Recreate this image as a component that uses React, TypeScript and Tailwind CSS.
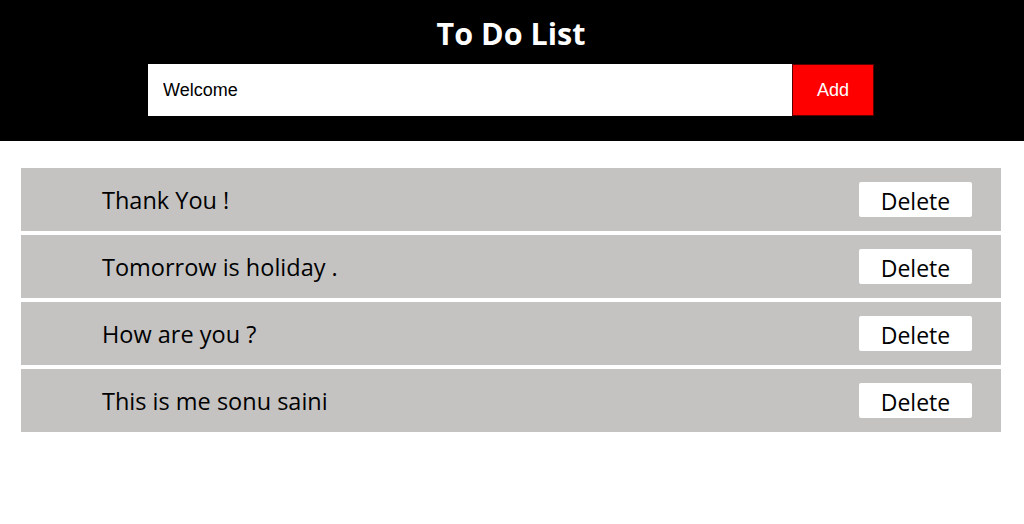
import { useState } from 'react'

const INITIAL = ['Thank You !', 'Tomorrow is holiday .', 'How are you ?', 'This is me sonu saini']

export default function App() {
  const [items, setItems] = useState(INITIAL)
  const [text, setText] = useState('Welcome')

  function add() {
    if (!text.trim()) return
    setItems([...items, text])
    setText('')
  }

  return (
    <div className="min-h-[524px] bg-white" style={{ fontFamily: '"Open Sans", "Noto Sans", sans-serif' }}>
      {/* Header */}
      <div className="bg-black h-[141px] flex flex-col items-center pt-[13px] pr-[2px]">
        <h1 className="text-white text-[30.5px] leading-[41px] font-bold">To Do List</h1>
        <div className="flex mt-[10px]">
          <input
            value={text}
            onChange={(e) => setText(e.target.value)}
            className="w-[644px] h-[52px] bg-white px-[15px] text-[18px] text-black outline-none"
            style={{ fontFamily: '"Liberation Sans", Arial, sans-serif' }}
          />
          <button
            onClick={add}
            className="w-[82px] h-[52px] bg-[#ff0000] border border-[#5a0000] text-white text-[18px]"
            style={{ fontFamily: '"Liberation Sans", Arial, sans-serif' }}
          >
            Add
          </button>
        </div>
      </div>

      {/* List */}
      <div className="px-[21px] pt-[27px] flex flex-col gap-[4px] w-[1022px]">
        {items.map((item, i) => (
          <div key={i} className="h-[63px] bg-[#c4c3c2] flex items-center pl-[81px] pr-[29px]">
            <span className="flex-1 text-[23.5px] text-black pt-[3px]">{item}</span>
            <button
              onClick={() => setItems(items.filter((_, j) => j !== i))}
              className="w-[113px] h-[35px] bg-white rounded-[2px] text-[23px] text-black leading-none pt-[3px]"
            >
              Delete
            </button>
          </div>
        ))}
      </div>
    </div>
  )
}
